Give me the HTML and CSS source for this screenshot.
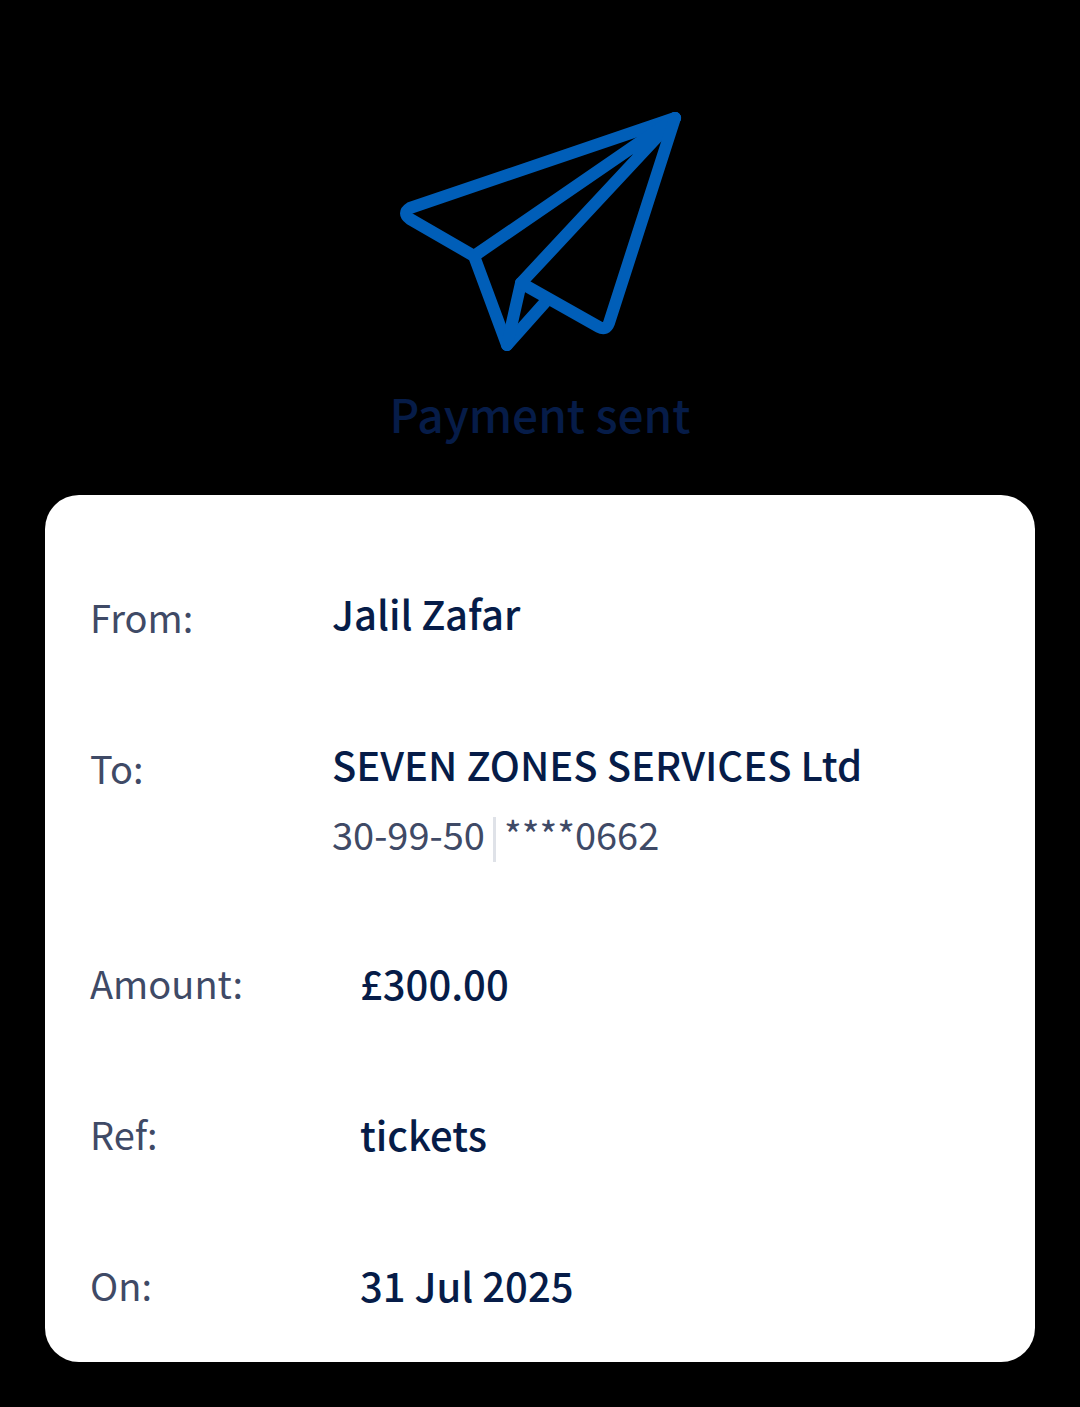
FILE: index.html
```html
<!DOCTYPE html>
<html lang="en">
<head>
<meta charset="utf-8">
<meta name="viewport" content="width=device-width, initial-scale=1">
<title>Payment sent</title>
<link rel="stylesheet" href="styles.css">
</head>
<body>
<main class="receipt">
  <header class="hero">
    <svg class="plane" viewBox="390 100 300 260" aria-hidden="true">
      <path d="M675 118 L410 208 Q402 213 410 219 L474 256 L507 345 L548 299"/>
      <path d="M474 256 L675 118 L521 283 L507 345"/>
      <path d="M675 118 L609 323 Q606 331 599 327 L521 283"/>
    </svg>
    <h1 class="title">Payment sent</h1>
  </header>
  <dl class="card">
    <div class="row"><dt class="label">From:</dt><dd class="value">Jalil Zafar</dd></div>
    <div class="row"><dt class="label">To:</dt><dd class="value">SEVEN ZONES SERVICES Ltd
      <div class="account"><span>30-99-50</span><span class="divider"></span><span>****0662</span></div></dd></div>
    <div class="row detail"><dt class="label">Amount:</dt><dd class="value">£300.00</dd></div>
    <div class="row detail"><dt class="label">Ref:</dt><dd class="value">tickets</dd></div>
    <div class="row detail"><dt class="label">On:</dt><dd class="value">31 Jul 2025</dd></div>
  </dl>
</main>
</body>
</html>
```
FILE: styles.css
```css
* { box-sizing: border-box; }
body {
  margin: 0;
  background: #000;
  color: #061c48;
  font-family: "Noto Sans CJK SC", "Noto Sans", sans-serif;
}
.receipt { padding: 100px 45px 45px; }
.hero { display: flex; flex-direction: column; align-items: center; }
.plane {
  width: 300px;
  height: 260px;
  fill: none;
  stroke: #005eb8;
  stroke-width: 12px;
  stroke-linecap: round;
  stroke-linejoin: round;
}
.title { margin: 17px 0 46px; font-size: 46px; line-height: 72px; font-weight: 500; }
.card {
  display: flex;
  flex-direction: column;
  gap: 87px;
  margin: 0;
  padding: 88px 45px 47px;
  background: #fff;
  border-radius: 34px;
}
.row { display: grid; grid-template-columns: 242px 1fr; }
.detail { grid-template-columns: 270px 1fr; align-items: end; }
.label { padding-top: 4px; color: #3f4a66; font-size: 38px; line-height: 60px; }
.value { margin: 0; font-size: 40px; line-height: 60px; font-weight: 500; }
.account {
  display: flex;
  gap: 8px;
  margin-top: 12px;
  color: #3f4a66;
  font-size: 38px;
  line-height: 56px;
  font-weight: 400;
}
.divider { align-self: flex-end; width: 3px; height: 45px; background: #dfe2e8; }
```
